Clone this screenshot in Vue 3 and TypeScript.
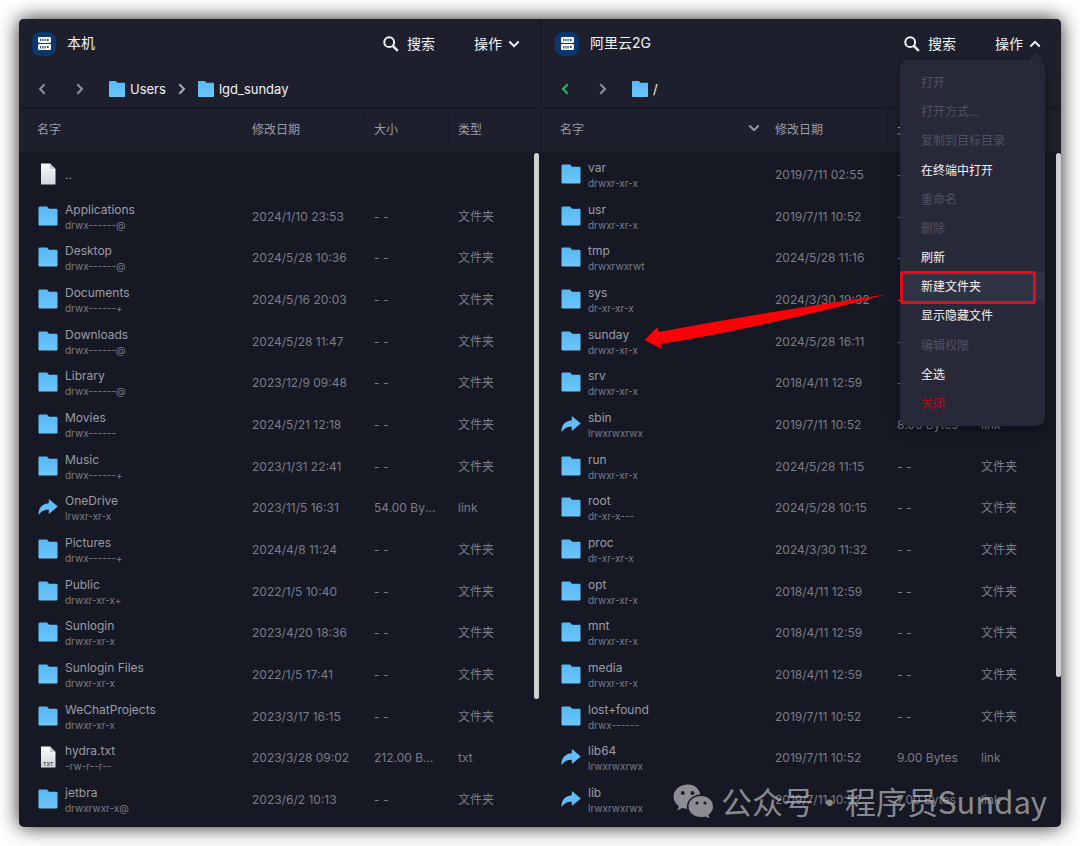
<script setup lang="ts">
import { ref } from 'vue'

type Kind = 'folder' | 'link' | 'file' | 'txt'

interface Entry {
  name: string
  perm: string
  date: string
  size: string
  kind: Kind
}

interface Pane {
  id: string
  title: string
  path: string[]
  canGoBack: boolean
  sorted: boolean
  menuOpen: boolean
  entries: Entry[]
}

interface MenuItem {
  label: string
  state: 'on' | 'off' | 'active' | 'danger'
}

const entry = (name: string, perm: string, date: string, kind: Kind = 'folder', size = '- -'): Entry => ({
  name,
  perm,
  date,
  size,
  kind,
})

const panes = ref<Pane[]>([
  {
    id: 'local',
    title: '本机',
    path: ['Users', 'lgd_sunday'],
    canGoBack: false,
    sorted: false,
    menuOpen: false,
    entries: [
      entry('..', '', '', 'file', ''),
      entry('Applications', 'drwx------@', '2024/1/10 23:53'),
      entry('Desktop', 'drwx------@', '2024/5/28 10:36'),
      entry('Documents', 'drwx------+', '2024/5/16 20:03'),
      entry('Downloads', 'drwx------@', '2024/5/28 11:47'),
      entry('Library', 'drwx------@', '2023/12/9 09:48'),
      entry('Movies', 'drwx------', '2024/5/21 12:18'),
      entry('Music', 'drwx------+', '2023/1/31 22:41'),
      entry('OneDrive', 'lrwxr-xr-x', '2023/11/5 16:31', 'link', '54.00 Bytes'),
      entry('Pictures', 'drwx------+', '2024/4/8 11:24'),
      entry('Public', 'drwxr-xr-x+', '2022/1/5 10:40'),
      entry('Sunlogin', 'drwxr-xr-x', '2023/4/20 18:36'),
      entry('Sunlogin Files', 'drwxr-xr-x', '2022/1/5 17:41'),
      entry('WeChatProjects', 'drwxr-xr-x', '2023/3/17 16:15'),
      entry('hydra.txt', '-rw-r--r--', '2023/3/28 09:02', 'txt', '212.00 Bytes'),
      entry('jetbra', 'drwxrwxr-x@', '2023/6/2 10:13'),
    ],
  },
  {
    id: 'remote',
    title: '阿里云2G',
    path: ['/'],
    canGoBack: true,
    sorted: true,
    menuOpen: true,
    entries: [
      entry('var', 'drwxr-xr-x', '2019/7/11 02:55'),
      entry('usr', 'drwxr-xr-x', '2019/7/11 10:52'),
      entry('tmp', 'drwxrwxrwt', '2024/5/28 11:16'),
      entry('sys', 'dr-xr-xr-x', '2024/3/30 19:32'),
      entry('sunday', 'drwxr-xr-x', '2024/5/28 16:11'),
      entry('srv', 'drwxr-xr-x', '2018/4/11 12:59'),
      entry('sbin', 'lrwxrwxrwx', '2019/7/11 10:52', 'link', '8.00 Bytes'),
      entry('run', 'drwxr-xr-x', '2024/5/28 11:15'),
      entry('root', 'dr-xr-x---', '2024/5/28 10:15'),
      entry('proc', 'dr-xr-xr-x', '2024/3/30 11:32'),
      entry('opt', 'drwxr-xr-x', '2018/4/11 12:59'),
      entry('mnt', 'drwxr-xr-x', '2018/4/11 12:59'),
      entry('media', 'drwxr-xr-x', '2018/4/11 12:59'),
      entry('lost+found', 'drwx------', '2019/7/11 10:52'),
      entry('lib64', 'lrwxrwxrwx', '2019/7/11 10:52', 'link', '9.00 Bytes'),
      entry('lib', 'lrwxrwxrwx', '2019/7/11 10:52', 'link', '7.00 Bytes'),
    ],
  },
])

const menu: MenuItem[] = [
  { label: '打开', state: 'off' },
  { label: '打开方式...', state: 'off' },
  { label: '复制到目标目录', state: 'off' },
  { label: '在终端中打开', state: 'on' },
  { label: '重命名', state: 'off' },
  { label: '删除', state: 'off' },
  { label: '刷新', state: 'on' },
  { label: '新建文件夹', state: 'active' },
  { label: '显示隐藏文件', state: 'on' },
  { label: '编辑权限', state: 'off' },
  { label: '全选', state: 'on' },
  { label: '关闭', state: 'danger' },
]

const typeLabel = (e: Entry): string => {
  if (e.kind === 'folder') return '文件夹'
  if (e.kind === 'file') return ''
  return e.kind
}
</script>

<template>
  <main class="window">
    <svg class="defs" aria-hidden="true">
      <defs>
        <linearGradient id="folderFill" x1="0" y1="0" x2="0" y2="1">
          <stop offset="0" stop-color="#58b7f3" />
          <stop offset="1" stop-color="#6cc6fb" />
        </linearGradient>
        <linearGradient id="paperFill" x1="0" y1="0" x2="0" y2="1">
          <stop offset="0" stop-color="#fbfcfc" />
          <stop offset="1" stop-color="#cfd5dc" />
        </linearGradient>
      </defs>
    </svg>

    <section v-for="pane in panes" :key="pane.id" class="pane" :aria-label="pane.title">
      <header class="titlebar">
        <span class="host">
          <svg viewBox="0 0 24 24" width="13" height="13" aria-hidden="true">
            <rect x="0" y="0" width="24" height="11" rx="2.5" fill="#fff" />
            <rect x="0" y="13" width="24" height="11" rx="2.5" fill="#fff" />
            <path
              d="M5 3v4.500M9 3v4.500M13 3v4.500M5 16.500v4.500M9 16.500v4.500M13 16.500v4.500"
              stroke="#0b386a"
              stroke-width="2"
            />
            <circle cx="18" cy="5.500" r="2" fill="#0b386a" />
            <circle cx="18" cy="18.500" r="2" fill="#0b386a" />
          </svg>
        </span>
        <h1>{{ pane.title }}</h1>
        <button type="button" class="tool search">
          <svg viewBox="0 0 16 16" width="16" height="16" fill="none" stroke="#f2f3f6" aria-hidden="true">
            <circle cx="6.200" cy="6.200" r="4.900" stroke-width="2" />
            <path d="M9.800 9.800 14.800 14.900" stroke-width="2.400" />
          </svg>
          搜索
        </button>
        <button type="button" class="tool action" :aria-expanded="pane.menuOpen" @click="pane.menuOpen = !pane.menuOpen">
          操作
          <svg viewBox="0 0 12 12" width="12" height="12" fill="none" stroke="#f2f3f6" stroke-width="2" aria-hidden="true">
            <path :d="pane.menuOpen ? 'M1.300 8.500 6 3.800l4.700 4.700' : 'M1.300 3.500 6 8.200l4.700-4.700'" />
          </svg>
        </button>

        <div v-if="pane.menuOpen" class="menu" role="menu">
          <button
            v-for="item in menu"
            :key="item.label"
            type="button"
            role="menuitem"
            :class="['item', item.state]"
            :disabled="item.state === 'off'"
          >
            {{ item.label }}
          </button>
          <svg class="pointer" viewBox="0 0 244 60" width="244" height="60" aria-hidden="true">
            <path d="M242 15.500 C170 26 90 39 14.500 53 L13.500 48 L0.500 61 L17.500 70 L16.500 65 C90 53 165 36 242 15.500Z" transform="translate(0 -13)" fill="#fb0007" />
          </svg>
        </div>
      </header>

      <nav class="pathbar" aria-label="路径">
        <button type="button" :class="['step', { ready: pane.canGoBack }]" aria-label="后退">
          <svg viewBox="0 0 8 12" width="8" height="12" fill="none" stroke="currentColor" stroke-width="2" aria-hidden="true">
            <path d="M6.700 1.300 2 6l4.700 4.700" />
          </svg>
        </button>
        <button type="button" class="step" aria-label="前进">
          <svg viewBox="0 0 8 12" width="8" height="12" fill="none" stroke="currentColor" stroke-width="2" aria-hidden="true">
            <path d="M1.300 1.300 6 6l-4.700 4.700" />
          </svg>
        </button>
        <ol class="crumbs">
          <li v-for="(part, i) in pane.path" :key="part">
            <svg v-if="i > 0" class="sep" viewBox="0 0 8 12" width="8" height="12" fill="none" stroke="currentColor" stroke-width="2" aria-hidden="true">
              <path d="M1.300 1.300 6 6l-4.700 4.700" />
            </svg>
            <a href="#">
              <svg viewBox="0 0 20 20" width="16" height="16" aria-hidden="true">
                <path d="M1 0h7.500l2 2.200H19a1 1 0 0 1 1 1V19a1 1 0 0 1-1 1H1a1 1 0 0 1-1-1V1a1 1 0 0 1 1-1Z" fill="url(#folderFill)" />
              </svg>
              {{ part }}
            </a>
          </li>
        </ol>
      </nav>

      <div class="listing">
        <table>
          <thead>
            <tr>
              <th scope="col">
                名字
                <svg v-if="pane.sorted" viewBox="0 0 12 12" width="12" height="12" fill="none" stroke="#9a9ca6" stroke-width="2" aria-hidden="true">
                  <path d="M1.300 3.500 6 8.200l4.700-4.700" />
                </svg>
              </th>
              <th scope="col">修改日期</th>
              <th scope="col">大小</th>
              <th scope="col">类型</th>
            </tr>
          </thead>
          <tbody>
            <tr v-for="e in pane.entries" :key="e.name">
              <td class="name">
                <svg v-if="e.kind === 'folder'" viewBox="0 0 20 20" width="20" height="20" aria-hidden="true">
                  <path d="M1.500 .5h7.500l2 2.200H18.500a1 1 0 0 1 1 1V18.500a1 1 0 0 1-1 1H1.500a1 1 0 0 1-1-1V1.500a1 1 0 0 1 1-1Z" fill="url(#folderFill)" />
                </svg>
                <svg v-else-if="e.kind === 'link'" viewBox="0 0 20 20" width="20" height="20" aria-hidden="true">
                  <path d="M10.800 2 19.800 9.500 10.800 17v-4.200C6.500 12.600 3.200 14 .6 18.300 0 11.500 3.800 6.800 10.800 6.200Z" fill="#62bdf9" />
                </svg>
                <svg v-else viewBox="0 0 20 22" width="20" height="22" aria-hidden="true">
                  <path d="M3 .5h9L17.500 6v15.500H3Z" fill="url(#paperFill)" />
                  <path d="M12 .5V6h5.500Z" fill="#c3c9cf" />
                  <text v-if="e.kind === 'txt'" class="badge" x="10.200" y="19.500" text-anchor="middle">TXT</text>
                </svg>
                <span class="label">
                  <span>{{ e.name }}</span>
                  <small v-if="e.perm">{{ e.perm }}</small>
                </span>
              </td>
              <td>{{ e.date }}</td>
              <td>{{ e.size }}</td>
              <td>{{ typeLabel(e) }}</td>
            </tr>
          </tbody>
        </table>
        <span :class="['thumb', pane.id]"></span>
      </div>
    </section>

    <div class="signature">
      <svg viewBox="0 0 40 34" width="40" height="34" aria-hidden="true">
        <path
          d="M15 .5C6.800.5.500 6 .500 12.800c0 3.900 2.100 7.200 5.300 9.400L4.300 26.500l5-2.600c1.600.5 3.200.8 4.900.9-.2-.8-.3-1.500-.3-2.300 0-6.300 5.900-11.600 13.300-12C26 4.500 21.800.5 15 .5ZM9.800 7.100a1.900 1.900 0 1 1 0 3.800 1.900 1.900 0 0 1 0-3.800ZM19.500 7.100a1.900 1.900 0 1 1 0 3.800 1.900 1.900 0 0 1 0-3.800Z"
          fill="currentColor"
          fill-rule="evenodd"
        />
        <path
          d="M28 12c-7 0-12.500 4.600-12.500 10.500S21 33 28 33c1.500 0 3-.2 4.300-.6l4.200 2-1.100-3.700c2.800-1.900 4.600-4.800 4.600-8.200C40 16.600 34.800 12 28 12ZM24 17.400a1.600 1.600 0 1 1 0 3.200 1.600 1.600 0 0 1 0-3.200ZM32 17.400a1.600 1.600 0 1 1 0 3.200 1.600 1.600 0 0 1 0-3.200Z"
          fill="currentColor"
          fill-rule="evenodd"
        />
      </svg>
      <span>公众号·程序员Sunday</span>
    </div>
  </main>
</template>

<style>
body {
  margin: 0;
  background: #fff;
}
</style>

<style scoped>
.window {
  position: relative;
  display: grid;
  grid-template-columns: minmax(0, 1fr) minmax(0, 1fr);
  box-sizing: border-box;
  min-height: calc(100vh - 38px);
  margin: 19px;
  border-radius: 5px;
  background: #161823;
  box-shadow: 0 0 20px rgba(0, 0, 0, 0.85);
  color: #f2f3f6;
  font-family: Inter, 'Noto Sans CJK SC', sans-serif;
  font-size: 12px;
}

.defs {
  position: absolute;
  width: 0;
  height: 0;
}

.pane {
  min-width: 0;
  box-sizing: border-box;
  display: flex;
  flex-direction: column;
}

.pane + .pane {
  border-left: 2px solid #181a27;
}

.pane:first-of-type .titlebar {
  border-top-left-radius: 5px;
}

.pane:last-of-type .titlebar {
  border-top-right-radius: 5px;
}

button {
  padding: 0;
  border: 0;
  background: none;
  color: inherit;
  font: inherit;
  cursor: pointer;
}

svg {
  display: block;
  flex: none;
}

.titlebar {
  position: relative;
  display: flex;
  align-items: center;
  height: 49px;
  padding: 0 20px 0 13px;
  background: #1e1f2d;
}

.host {
  display: grid;
  place-items: center;
  width: 24px;
  height: 24px;
  border-radius: 8px;
  background: #0b386a;
}

h1 {
  flex: 1;
  margin: 0 0 2px 11px;
  font-size: 14px;
  font-weight: 400;
  line-height: 20px;
}

.tool {
  display: flex;
  align-items: center;
  gap: 8px;
  font-size: 14px;
  line-height: 20px;
}

.tool.action {
  gap: 6px;
  margin-left: 39px;
}

.pathbar {
  display: flex;
  align-items: center;
  box-sizing: border-box;
  height: 41px;
  padding: 2px 0 0 19px;
  background: #1e1f2d;
  border-bottom: 2px solid #181a27;
}

.step {
  width: 8px;
  margin-right: 30px;
  color: #8d8f9b;
}

.step.ready {
  color: #22b866;
}

.crumbs,
.crumbs li,
.crumbs a {
  display: flex;
  align-items: center;
}

.crumbs {
  margin: 0 0 0 -5px;
  padding: 0;
  list-style: none;
}

.crumbs a {
  gap: 5px;
  color: inherit;
  font-size: 13px;
  line-height: 20px;
  text-decoration: none;
}

.sep {
  margin: 0 12px;
  color: #a9abb5;
}

.listing {
  position: relative;
  flex: 1;
  display: flex;
}

table {
  flex: 1;
  min-width: 0;
  display: flex;
  flex-direction: column;
}

tr {
  display: grid;
  grid-template-columns: 223px 122px 84px minmax(0, 1fr);
}

thead {
  background: #1e1f2d;
}

th {
  display: flex;
  align-items: center;
  justify-content: space-between;
  box-sizing: border-box;
  height: 35px;
  margin: 4px 0;
  padding: 0 5px 5px 9px;
  border-left: 1px solid #181a27;
  color: #9a9ca6;
  font-weight: 400;
  text-align: left;
}

th:first-child {
  padding-left: 17px;
  border-left-color: transparent;
}

tbody {
  flex: 1;
  display: flex;
  flex-direction: column;
  padding: 2px 0 6px;
  color: #7b7d88;
}

tbody tr {
  flex: 1;
  align-items: center;
}

td {
  min-width: 0;
  overflow: hidden;
  padding: 0 10px;
  line-height: 20px;
  white-space: nowrap;
  text-overflow: ellipsis;
}

.name {
  display: flex;
  align-items: center;
  gap: 7px;
  padding-left: 19px;
  color: #9a9ca6;
}

.name svg {
  margin-bottom: 2px;
}

.label {
  display: flex;
  flex-direction: column;
  line-height: 16px;
}

small {
  color: #7b7d88;
  font-size: 10px;
  line-height: 14px;
}

.badge {
  fill: #4a5058;
  font-size: 5px;
  font-weight: 700;
}

.thumb {
  position: absolute;
  top: 44px;
  right: 1px;
  width: 5px;
  border-radius: 3px;
  background: #cfd0d1;
}

.thumb.local {
  height: 76%;
}

.thumb.remote {
  right: 0;
  height: 73%;
}

.menu {
  position: absolute;
  z-index: 2;
  top: 41px;
  right: 16px;
  display: flex;
  flex-direction: column;
  box-sizing: border-box;
  width: 145px;
  height: 366px;
  padding: 8px 0;
  border-radius: 9px;
  background: #282938;
  box-shadow: 0 4px 12px rgba(0, 0, 0, 0.35);
}

.menu::before {
  content: '';
  position: absolute;
  top: -7px;
  right: 2px;
  border: 7px solid transparent;
  border-top: 0;
  border-bottom-color: #282938;
}

.item {
  position: relative;
  flex: 1;
  padding: 0 0 2px 21px;
  text-align: left;
}

.item.off {
  color: #505260;
}

.item.danger {
  color: #c1040f;
}

.item.active {
  background: #303343;
}

.item.active::after {
  content: '';
  position: absolute;
  inset: -1px 9px -3px 0;
  border: 3px solid #ea0a17;
  border-radius: 2px;
}

.pointer {
  position: absolute;
  top: 232px;
  left: -256px;
  pointer-events: none;
}

.signature {
  position: absolute;
  z-index: 1;
  right: 14px;
  bottom: 4px;
  display: flex;
  align-items: center;
  gap: 8px;
  color: rgba(205, 205, 208, 0.65);
  font-family: 'Noto Sans CJK SC', sans-serif;
  font-size: 31px;
  line-height: 44px;
  pointer-events: none;
}
</style>
